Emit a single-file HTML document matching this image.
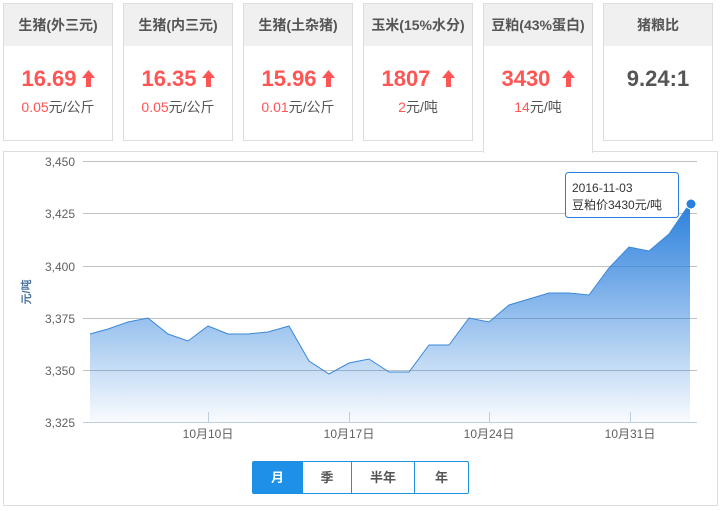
<!DOCTYPE html>
<html><head><meta charset="utf-8"><style>
*{margin:0;padding:0;box-sizing:border-box}
body{width:723px;height:511px;background:#fff;font-family:"Liberation Sans","Noto Sans CJK SC",sans-serif;position:relative;overflow:hidden}
.card{position:absolute;top:3px;width:110px;height:138px;border:1px solid #ddd;background:#fff;text-align:center}
.card .h{height:42px;background:#f0f0f0;line-height:42px;font-size:14px;font-weight:bold;color:#555}
.card .v{margin-top:20px;font-size:22px;font-weight:bold;color:#f55;height:26px;line-height:26px}
.card .v svg{margin-left:5px;vertical-align:-1px}
.card .s{margin-top:5px;font-size:14px;color:#555}
.card .s b{font-weight:normal;color:#f55}
.act{height:150px;border-bottom:none;z-index:2}
.panel{position:absolute;left:3px;top:151px;width:715px;height:355px;border:1px solid #ddd}
.btns{position:absolute;top:461px;left:252px;height:33px;display:flex;border:1px solid #1e90e0;border-radius:2px;font-size:13px;font-weight:bold;color:#555}
.btns div{border-left:1px solid #1e90e0;text-align:center;line-height:31px}
</style></head><body>
<div class="card" style="left:3px"><div class="h">生猪(外三元)</div><div class="v">16.69<svg width="13" height="17" viewBox="0 0 13 17"><path d="M6.5 0L13 8H9V17H4V8H0Z" fill="#f55"/></svg></div><div class="s"><b>0.05</b>元/公斤</div></div>
<div class="card" style="left:123px"><div class="h">生猪(内三元)</div><div class="v">16.35<svg width="13" height="17" viewBox="0 0 13 17"><path d="M6.5 0L13 8H9V17H4V8H0Z" fill="#f55"/></svg></div><div class="s"><b>0.05</b>元/公斤</div></div>
<div class="card" style="left:243px"><div class="h">生猪(土杂猪)</div><div class="v">15.96<svg width="13" height="17" viewBox="0 0 13 17"><path d="M6.5 0L13 8H9V17H4V8H0Z" fill="#f55"/></svg></div><div class="s"><b>0.01</b>元/公斤</div></div>
<div class="card" style="left:363px"><div class="h">玉米(15%水分)</div><div class="v">1807 <svg width="13" height="17" viewBox="0 0 13 17"><path d="M6.5 0L13 8H9V17H4V8H0Z" fill="#f55"/></svg></div><div class="s"><b>2</b>元/吨</div></div>
<div class="card act" style="left:483px"><div class="h">豆粕(43%蛋白)</div><div class="v">3430 <svg width="13" height="17" viewBox="0 0 13 17"><path d="M6.5 0L13 8H9V17H4V8H0Z" fill="#f55"/></svg></div><div class="s"><b>14</b>元/吨</div></div>
<div class="card" style="left:603px"><div class="h">猪粮比</div><div class="v" style="color:#555">9.24:1</div></div>
<div class="panel"></div>
<svg style="position:absolute;left:0;top:0" width="723" height="511">
<defs><linearGradient id="g" x1="0" y1="0" x2="0" y2="1"><stop offset="0" stop-color="#2a7fdc"/><stop offset="1" stop-color="#2a7fdc" stop-opacity="0.03"/></linearGradient></defs>
<g stroke="#c0c0c0" stroke-width="1">
<line x1="83" y1="161.5" x2="697" y2="161.5"/><line x1="83" y1="213.5" x2="697" y2="213.5"/><line x1="83" y1="266.5" x2="697" y2="266.5"/><line x1="83" y1="318.5" x2="697" y2="318.5"/><line x1="83" y1="370.5" x2="697" y2="370.5"/></g>
<path d="M90,334 L108,329 L128,322 L148,318 L168,334 L188,341 L208,326 L228,334 L248,334 L268,332 L289,326 L309,361 L329,374 L349,363 L369,359 L389,372 L409,372 L429,345 L449,345 L469,318 L489,322 L509,305 L529,299 L549,293 L569,293 L589,295 L609,268 L629,247 L649,251 L669,234 L690,203 L690,422 L90,422Z" fill="url(#g)"/>
<path d="M90,334 L108,329 L128,322 L148,318 L168,334 L188,341 L208,326 L228,334 L248,334 L268,332 L289,326 L309,361 L329,374 L349,363 L369,359 L389,372 L409,372 L429,345 L449,345 L469,318 L489,322 L509,305 L529,299 L549,293 L569,293 L589,295 L609,268 L629,247 L649,251 L669,234 L690,203" fill="none" stroke="#3a88d8" stroke-width="1"/>
<line x1="83" y1="422.5" x2="697" y2="422.5" stroke="#c0cfe0"/>
<g stroke="#c0cfe0"><line x1="208.5" y1="412" x2="208.5" y2="422"/><line x1="349.5" y1="412" x2="349.5" y2="422"/><line x1="489.5" y1="412" x2="489.5" y2="422"/><line x1="630.5" y1="412" x2="630.5" y2="422"/></g>
<circle cx="691" cy="204" r="5" fill="#2a7fdc" stroke="#fff" stroke-width="1"/>
<g font-family="Liberation Sans,Noto Sans CJK SC,sans-serif" font-size="12" fill="#606060" text-anchor="end">
<text x="75" y="166">3,450</text><text x="75" y="218">3,425</text><text x="75" y="271">3,400</text><text x="75" y="323">3,375</text><text x="75" y="375">3,350</text><text x="75" y="427">3,325</text></g>
<g font-family="Liberation Sans,Noto Sans CJK SC,sans-serif" font-size="12" fill="#606060" text-anchor="middle">
<text x="208" y="438">10月10日</text><text x="349" y="438">10月17日</text><text x="489" y="438">10月24日</text><text x="630" y="438">10月31日</text></g>
<text transform="translate(30,292) rotate(-90)" font-family="Liberation Sans,Noto Sans CJK SC,sans-serif" font-size="11" font-weight="bold" fill="#4d759e" text-anchor="middle">元/吨</text>
<rect x="565.5" y="172.5" width="113" height="45" rx="3" fill="#fff" fill-opacity="0.95" stroke="#2a7fdc"/>
<text x="572" y="192" font-family="Liberation Sans,Noto Sans CJK SC,sans-serif" font-size="12" fill="#333">2016-11-03</text>
<text x="572" y="209" font-family="Liberation Sans,Noto Sans CJK SC,sans-serif" font-size="12" fill="#333">豆粕价3430元/吨</text>
</svg>
<div class="btns"><div style="width:49px;border-left:none;background:#1e90e8;color:#fff">月</div><div style="width:49px">季</div><div style="width:63px">半年</div><div style="width:54px">年</div></div>
</body></html>
